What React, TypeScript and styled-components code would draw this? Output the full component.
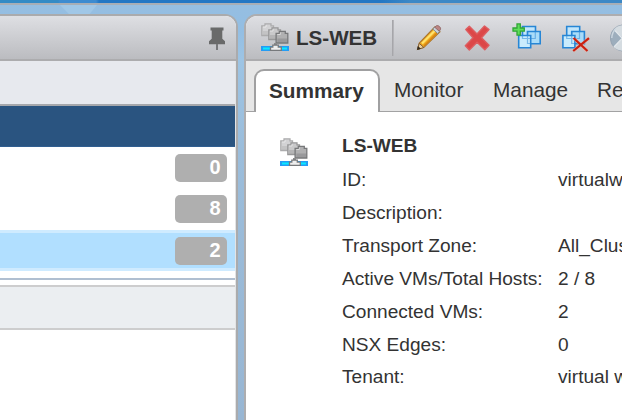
import React from "react";
import styled, { createGlobalStyle } from "styled-components";

const GlobalStyle = createGlobalStyle`
  * { box-sizing: border-box; }
  body { margin: 0; overflow: hidden; background: #99bbd9; }
`;

const Shell = styled.div`
  width: 622px;
  height: 420px;
  overflow: hidden;
  display: flex;
  flex-direction: column;
  font-family: "Liberation Sans", Arial, sans-serif;
  color: #333;
  background: linear-gradient(#96bee1 0, #93bee3 30px, #9dc4e4 60px, #9bbddb 150px, #98b6d3 100%);
`;

const TopBar = styled.div`
  flex: none;
  height: 5px;
  background: linear-gradient(90deg, #348bc5 0 58px, #3d8bd0 60px 96px, #2377c4 99px 380px, #3c88c6 410px);
  border-bottom: 2px solid #a8aeb6;
`;

const Panels = styled.div`
  flex: 1;
  display: flex;
  gap: 6px;
  padding-top: 9px;
  min-height: 0;
  position: relative;
  &::before {
    content: "";
    position: absolute;
    top: 0;
    left: 60px;
    width: 37px;
    height: 9px;
    background: #a0c7e7;
    clip-path: polygon(0 0, 100% 0, 80% 100%, 24% 100%);
  }
`;

const LeftPanel = styled.section`
  flex: none;
  width: 238px;
  display: flex;
  flex-direction: column;
  border: 2px solid #aaabad;
  border-width: 2px 2px 0 0;
  border-radius: 0 13px 0 0;
  overflow: hidden;
  background: #fff;
`;

const RightPanel = styled.section`
  flex: none;
  width: 378px;
  display: flex;
  flex-direction: column;
  border: 2px solid #adadaf;
  border-width: 2px 0 0 2px;
  border-radius: 13px 0 0 0;
  overflow: hidden;
  background: #fff;
`;

const Header = styled.header`
  flex: none;
  display: flex;
  align-items: center;
  height: 45px;
  border-bottom: 2px solid #acacae;
  background: linear-gradient(#dedfe3, #bbbcc0);
`;

const PinHeader = styled(Header)`
  justify-content: flex-end;
  padding: 2px 11px 0 0;
`;

const ObjectHeader = styled(Header)`
  padding-left: 15px;
`;

const LeftBody = styled.div`
  flex: 1;
  display: flex;
  flex-direction: column;
  border-right: 1px solid #e3e4e5;
`;

const Breadcrumb = styled.div`
  flex: none;
  height: 45px;
  background: #e7e9ee;
  border-bottom: 2px solid #a5a7ab;
`;

const CategoryBar = styled.div`
  flex: none;
  height: 41px;
  background: #2a5480;
  border-bottom: 1px solid #315f91;
`;

const CountRow = styled.div<{ $selected?: boolean }>`
  flex: none;
  height: ${(p) => (p.$selected ? 41 : 41.5)}px;
  display: flex;
  align-items: center;
  justify-content: flex-end;
  padding-right: 8.5px;
  background: ${(p) => (p.$selected ? "#b1dfff" : "#fff")};
  border: solid ${(p) => (p.$selected ? "#cfebff" : "#fff")};
  border-width: 3px 0;
`;

const Count = styled.span`
  width: 52px;
  height: 28px;
  border-radius: 5px;
  background: #afafaf;
  color: #fff;
  font-size: 20px;
  font-weight: 700;
  line-height: 27px;
  text-align: right;
  padding-right: 6px;
`;

const SectionRule = styled.div`
  flex: none;
  height: 9px;
  margin-top: 7px;
  border-top: 2px solid #b0bfd1;
  margin-bottom: -2px;
`;

const SectionBar = styled.div`
  flex: none;
  height: 45px;
  background: #ebeef1;
  border: solid #cdcdce;
  border-width: 2px 0;
`;

const Title = styled.h1`
  flex: none;
  margin: 0 0 0 7px;
  width: 81px;
  font-size: 20.6px;
  line-height: 24px;
  white-space: nowrap;
`;

const Divider = styled.span`
  flex: none;
  width: 2px;
  height: 36px;
  margin: 0 20px 0 15px;
  background: linear-gradient(90deg, #a6a6aa 0 1px, #b5b5b9 1px);
`;

const Tools = styled.div`
  display: flex;
  align-items: center;
  gap: 20px;
  flex: none;
`;

const Tool = styled.button`
  display: flex;
  width: 29px;
  height: 30px;
  padding: 0;
  border: 0;
  background: none;
`;

const TabStrip = styled.nav`
  flex: none;
  height: 51px;
  padding: 8px 0 0 8px;
  display: flex;
  background: linear-gradient(#a2a2a3, #a2a2a3) 0 100% / 100% 1px no-repeat, #e6e6e6;
`;

const Tab = styled.div<{ $active?: boolean; $width: number }>`
  flex: none;
  width: ${(p) => p.$width}px;
  height: 43px;
  border: 2px solid ${(p) => (p.$active ? "#a0a0a1" : "transparent")};
  border-bottom: 0;
  border-radius: 10px 10px 0 0;
  background: ${(p) => (p.$active ? "#fff" : "transparent")};
  font-size: 20.8px;
  font-weight: ${(p) => (p.$active ? 700 : 400)};
  line-height: 24px;
  padding: ${(p) => (p.$active ? "8px 0 0 13px" : "7px 0 0 12px")};
  white-space: nowrap;
`;

const Summary = styled.main`
  display: flex;
  flex: 1;
  padding: 17px 0 0 34px;
`;

const SummaryIcon = styled.div`
  flex: none;
  width: 62px;
  padding-top: 9px;
`;

const Details = styled.dl`
  margin: 0;
  flex: none;
  display: grid;
  grid-template-columns: 216px 90px;
  grid-template-rows: 34.5px;
  grid-auto-rows: 32.85px;
  align-items: center;
  font-size: 19.1px;
  white-space: nowrap;
`;

const ObjectName = styled.dt`
  grid-column: 1 / -1;
  font-weight: 700;
`;

const Label = styled.dt`
  padding-top: 1px;
`;

const Value = styled.dd`
  margin: 0;
  padding-top: 1px;
`;

const SwitchSvg = styled.svg`
  flex: none;
  width: 28px;
  height: 29px;
`;

const Server = ({ x, y, light, dark }: { x: number; y: number; light: string; dark: string }) => (
  <g transform={`translate(${x} ${y})`}>
    <path d="M.8 2.8H4V.8h6v2h2.5v9.7H.8Z" fill={light} stroke={dark} strokeWidth="1.3" />
    <path d="M2 8h10v4H2Z" fill={dark} opacity=".4" />
    <path d="M2 4h3V2" fill="none" stroke="#fff" strokeOpacity=".5" />
  </g>
);

const SwitchIcon = () => (
  <SwitchSvg viewBox="0 0 28 29">
    <Server x={0} y={0} light="#d2d2d4" dark="#acacad" />
    <Server x={7} y={4} light="#c9c9ca" dark="#989899" />
    <Server x={14.3} y={7.5} light="#b0b0b1" dark="#77787a" />
    <path d="M14.5 20v4" stroke="#8b8b8b" strokeWidth="3" />
    <path d="M0 23h28v5H0Z" fill="#249cf4" />
    <path d="M2 24.4h8v2H2ZM20 24.4h6v2h-6Z" fill="#08eaff" />
    <path d="M9.5 27.3v-3.2h2.3v-2h5.5v2h3v3.2Z" fill="#eee" stroke="#77797c" strokeWidth="1.3" />
  </SwitchSvg>
);

const PinIcon = () => (
  <svg width="16" height="23" viewBox="0 0 16 23">
    <path d="M1.5.5h13v3h-1.2v8.3L16 14.3v2.9H0v-2.9l2.7-2.5V3.5H1.5Z" fill="#696a6a" />
    <path d="M7 17h2v6H7Z" fill="#77787a" />
  </svg>
);

const PencilIcon = () => (
  <svg width="29" height="30" viewBox="0 0 29 30">
    <path d="M3.5 26.5 5.3 20 20.7 4l5.3 4.8L10 24.3Z" fill="#efa71e" stroke="#a87630" strokeWidth="1.1" />
    <path d="m8 20.5 13-13" stroke="#ffe26b" strokeWidth="2.3" />
    <path d="m10 23 13-13" stroke="#d78311" strokeWidth="1.4" />
    <path d="m3.5 26.5 1.8-6.2 4.5 4.2Z" fill="#ecd19c" stroke="#805b33" />
    <path d="m3 27 .9-4 3 2.8Z" fill="#332b20" />
    <path d="m18.8 6 4.8 4.5 2.2-2.2L21 4Z" fill="#c9d2d8" stroke="#858d94" />
    <path d="m20.7 4.2 1.8-1.5c1.8-.8 4.9 1.8 3.9 4l-1.2 1.5Z" fill="#bc8582" stroke="#966f70" />
  </svg>
);

const DeleteIcon = () => (
  <svg width="29" height="30" viewBox="0 0 29 30">
    <path d="m2.8 6.5 3.5-3.3 7.7 7.9L21.5 3 26 6.6l-7.5 8.1 7.5 7.6-4.2 4.4-7.7-7.5-7.8 7.7-4-4.1 7.7-8.1Z" fill="#dc4748" stroke="#dd5d60" strokeLinejoin="round" strokeWidth="1.4" />
  </svg>
);

const Windows = () => (
  <g stroke="#2786d5" strokeWidth="1.6">
    <path d="M10.5 3.5h13v12h-13Z" fill="#c2e6fb" />
    <path d="M15.5 8.5h12.7v12.2H15.5Z" fill="#a9dcf9" />
    <path d="M6.7 12.5h12v12.2h-12Z" fill="#c9ecfd" />
    <path d="M10.5 12v3.5h12.8V9M15.5 12V8.5M15.5 12v8.5h3" fill="none" strokeOpacity=".5" strokeWidth="1.2" />
  </g>
);

const AddWindowsIcon = () => (
  <svg width="29" height="30" viewBox="0 0 29 30">
    <Windows />
    <path d="M5 .9h3.3V5h4v3.2h-4v4H5v-4H1V5h4Z" fill="#5fdf59" stroke="#31a437" strokeWidth="1.3" />
  </svg>
);

const RemoveWindowsIcon = () => (
  <svg width="29" height="30" viewBox="0 0 29 30">
    <g transform="translate(-4.8 0)"><Windows /></g>
    <path d="m14 16 12 12M27.5 15.5 12.5 28" stroke="#f5ad9e" strokeOpacity=".6" strokeWidth="3.4" />
    <path d="m12.5 15 14 13M28 15.2 12.2 28" stroke="#cb2110" strokeWidth="2.2" />
  </svg>
);

const BallIcon = () => (
  <svg width="29" height="30" viewBox="0 0 29 30">
    <circle cx="13.5" cy="15" r="13" fill="#9daebd" stroke="#98a6b4" strokeWidth="1.2" />
    <path d="M13 15 4 6.5C6.5 3 11 2 15 2l5 1ZM13 15 4 24.5c4 3 9 4 13 3Z" fill="#d5dce1" />
    <path d="m4 6.5 16 17M4 24 20 7" stroke="#e3e8ec" strokeWidth="1.4" />
    <path d="M1.8 15C2 10 3.5 8 5.5 6" fill="none" stroke="#cbd6df" strokeWidth="1.5" />
  </svg>
);

const facts = [
  ["ID:", "virtualwire-1"],
  ["Description:", ""],
  ["Transport Zone:", "All_Clusters"],
  ["Active VMs/Total Hosts:", "2 / 8"],
  ["Connected VMs:", "2"],
  ["NSX Edges:", "0"],
  ["Tenant:", "virtual wire tenant"],
];

export default function App() {
  return (
    <Shell>
      <GlobalStyle />
      <TopBar />
      <Panels>
        <LeftPanel>
          <PinHeader><PinIcon /></PinHeader>
          <LeftBody>
            <Breadcrumb />
            <CategoryBar />
            <CountRow><Count>0</Count></CountRow>
            <CountRow><Count>8</Count></CountRow>
            <CountRow $selected><Count>2</Count></CountRow>
            <SectionRule />
            <SectionBar />
          </LeftBody>
        </LeftPanel>
        <RightPanel>
          <ObjectHeader>
            <SwitchIcon />
            <Title>LS-WEB</Title>
            <Divider />
            <Tools>
              <Tool aria-label="Edit"><PencilIcon /></Tool>
              <Tool aria-label="Delete"><DeleteIcon /></Tool>
              <Tool aria-label="Add virtual machine"><AddWindowsIcon /></Tool>
              <Tool aria-label="Remove virtual machine"><RemoveWindowsIcon /></Tool>
              <Tool aria-label="Edge services"><BallIcon /></Tool>
            </Tools>
          </ObjectHeader>
          <TabStrip>
            <Tab $active $width={126}>Summary</Tab>
            <Tab $width={99}>Monitor</Tab>
            <Tab $width={104}>Manage</Tab>
            <Tab $width={130}>Related Objects</Tab>
          </TabStrip>
          <Summary>
            <SummaryIcon><SwitchIcon /></SummaryIcon>
            <Details>
              <ObjectName>LS-WEB</ObjectName>
              {facts.map(([label, value]) => (
                <React.Fragment key={label}>
                  <Label>{label}</Label>
                  <Value>{value}</Value>
                </React.Fragment>
              ))}
            </Details>
          </Summary>
        </RightPanel>
      </Panels>
    </Shell>
  );
}
